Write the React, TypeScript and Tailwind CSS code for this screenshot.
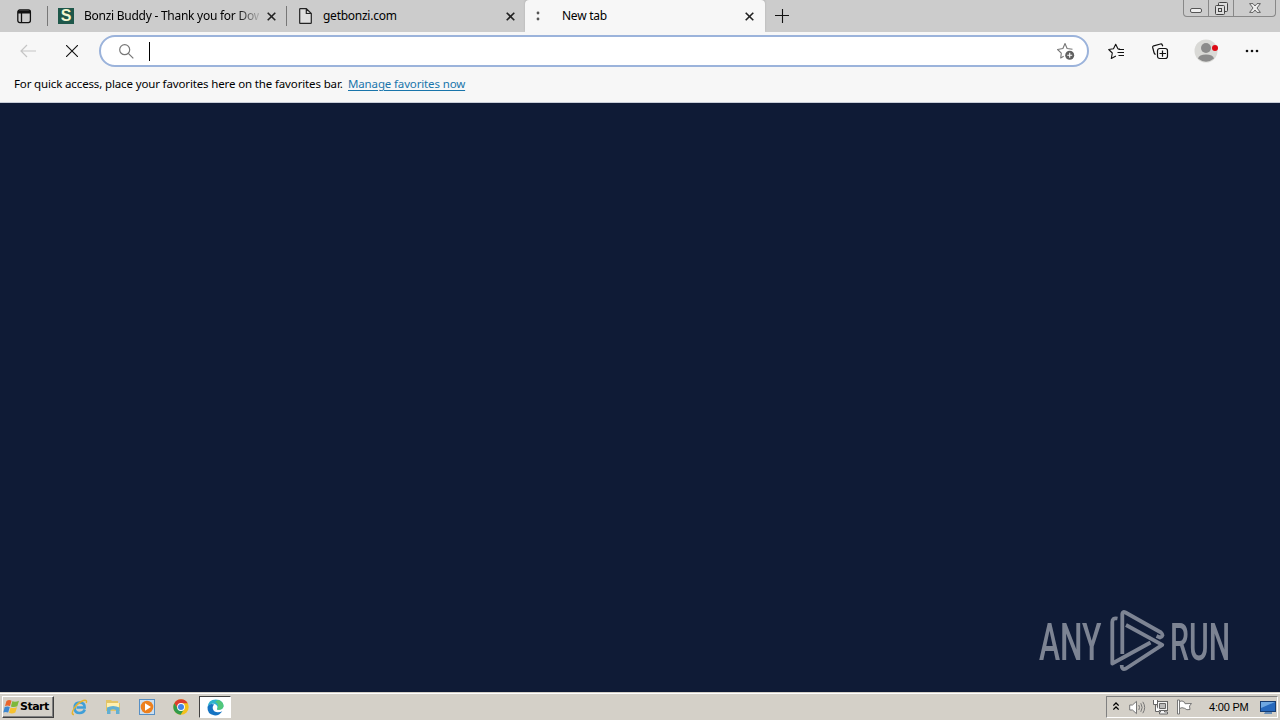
import type { ReactNode } from 'react';

function CloseX({ className = '' }: { className?: string }) {
  return (
    <svg className={className} width="9" height="9" viewBox="0 0 9 9" fill="none" stroke="#222" strokeWidth="1.6">
      <path d="M.7.7l7.6 7.6M8.3.7L.7 8.3" />
    </svg>
  );
}

function TabStrip() {
  return (
    <div className="flex h-8 w-full bg-[#cccccc] text-[12px] leading-4 text-black">
      <div className="flex w-[47px] items-center pl-[17px]">
        <svg width="15" height="15" viewBox="0 0 15 15" fill="none" stroke="#111" strokeWidth="1.3">
          <rect x=".8" y="1" width="12.6" height="12.6" rx="2" />
          <path d="M1 2.6h12.4M1 3.500h12.4" strokeWidth="1.8" />
          <path d="M4.5 4v9.5" />
        </svg>
      </div>
      <div className="mt-[6px] h-5 w-px bg-[#777]" />
      <div className="flex w-[238px] items-center pl-[10px]">
        <div className="flex h-4 w-4 items-center justify-center bg-[#1e574a] text-[16px] font-bold leading-4 text-[#f3f6cf] font-['Liberation_Sans']">
          S
        </div>
        <div className="ml-[10px] w-[175px] whitespace-nowrap [mask-image:linear-gradient(to_right,black_87%,transparent_102%)]">
          <span className="tracking-[-0.26px]">Bonzi Buddy - Thank you for Dow</span>
        </div>
        <CloseX className="ml-[8px]" />
      </div>
      <div className="mt-[6px] h-5 w-px bg-[#777]" />
      <div className="flex w-[238px] items-center pl-[12px]">
        <svg width="13" height="16" viewBox="0 0 13 16" fill="#dedede" stroke="#222" strokeWidth="1.2">
          <path d="M.7 1.300Q.7.600 1.400.6H7.300L12.300 5.500V14.700Q12.300 15.400 11.600 15.400H1.400Q.7 15.400.7 14.700zM7.300.6V5.500H12.300" />
        </svg>
        <span className="ml-[11px] w-[174px] tracking-[-0.26px]">getbonzi.com</span>
        <CloseX className="ml-[9px]" />
      </div>
      <div className="flex w-[240px] items-center rounded-t-[4px] bg-[#f7f7f7] pl-[11px] shadow-[0_-1px_2px_#aaa]">
        <svg width="4" height="10" viewBox="0 0 4 10" fill="#555">
          <circle cx="2" cy="2" r="1.400" />
          <circle cx="2" cy="8" r="1.400" />
        </svg>
        <span className="ml-[22px] w-[174px] tracking-[-0.26px]">New tab</span>
        <CloseX className="ml-[9px]" />
      </div>
      <div className="flex w-9 items-center pl-[10px]">
        <svg width="14" height="14" viewBox="0 0 14 14" stroke="#111" strokeWidth="1.1">
          <path d="M7.500 0V14M0 6.500H14" />
        </svg>
      </div>
      <div className="ml-auto mr-[4px] flex h-[17px] w-[93px] rounded-b-[4px] border border-t-0 border-[#888]">
        <div className="flex w-[25px] items-end justify-center border-r border-[#888] pb-[3px]">
          <svg width="12" height="5" viewBox="0 0 12 5">
            <rect x=".5" y=".5" width="11" height="4" rx="1.500" fill="#eee" stroke="#555" />
          </svg>
        </div>
        <div className="flex w-[25px] items-center justify-center border-r border-[#888]">
          <svg width="13" height="13" viewBox="0 0 13 13" fill="#ddd" stroke="#444">
            <rect x="3.500" y=".5" width="9" height="9" rx="1" />
            <rect x=".5" y="3.500" width="9" height="9" rx="1" />
            <rect x="3.500" y="6.500" width="3" height="3" />
          </svg>
        </div>
        <div className="flex flex-1 items-center justify-center">
          <svg width="12" height="10" viewBox="0 0 12 10" fill="#eee" stroke="#555" strokeWidth=".9">
            <path d="M.6.6H4L6 3 8 .6H11.400L8 5 11.400 9.400H8L6 7 4 9.400H.6L4 5z" />
          </svg>
        </div>
      </div>
    </div>
  );
}

function Toolbar() {
  return (
    <div className="flex h-[38px] w-full bg-[#f7f7f7] pt-[3px]">
      <div className="flex h-8 w-[99px] items-center pl-5">
        <svg width="17" height="14" viewBox="0 0 17 14" fill="none" stroke="#c5c5c5" strokeWidth="1.200">
          <path d="M16 7H1M7 1L1 7l6 6" />
        </svg>
        <svg className="ml-[29px]" width="12" height="12" viewBox="0 0 12 12" stroke="#111" strokeWidth="1.100">
          <path d="M0 0l12 12M12 0L0 12" />
        </svg>
      </div>
      <div className="flex h-8 w-[990px] items-center rounded-full border-2 border-[#9bb3db] bg-white pl-[18px]">
        <svg width="15" height="15" viewBox="0 0 15 15" fill="none" stroke="#777" strokeWidth="1.200">
          <circle cx="5.700" cy="5.700" r="5" />
          <path d="M9.300 9.300L14.300 14.300" />
        </svg>
        <div className="ml-[15px] h-[19px] w-px bg-black" />
        <svg className="ml-auto mr-[12px]" width="18" height="18" viewBox="0 0 18 18" fill="none" stroke="#777" strokeWidth="1.100" strokeLinejoin="round">
          <path d="M6.700 14.300 3.700 16 4.300 11.200.6 7.500 5.900 6.500 8 1.500 10.100 6.500 15.500 7.200" />
          <circle cx="12.700" cy="13.200" r="4.500" fill="#606060" stroke="none" />
          <path d="M12.700 10.700v5M10.200 13.200h5" stroke="#fff" />
        </svg>
      </div>
      <div className="flex h-8 flex-1 items-center pl-[19px]">
        <svg width="17" height="17" viewBox="0 0 17 17" fill="none" stroke="#111" strokeWidth="1.100" strokeLinejoin="round">
          <path d="M12 6.100 9.900 5.800 7.700 1.200 5.500 5.800.7 6.500 4.300 10 3.300 15.500 7.900 13.100M10.500 6.500H16M9.500 9.500H16M10.500 12.500H16" />
        </svg>
        <svg className="ml-[27px]" width="17" height="17" viewBox="0 0 17 17" fill="none" stroke="#111" strokeWidth="1.200">
          <path d="M3.600 11.500Q2.300 10.800 2 9.500L.7 4.500Q.4 3.200 1.700 2.800L8.500 1Q9.800.7 10.300 2L10.700 3.300" />
          <rect x="5.500" y="5.500" width="10" height="10" rx="2.200" />
          <path d="M10.500 7.500v6.300M7.500 10.500H14" />
        </svg>
        <svg className="ml-[25px]" width="24" height="24" viewBox="0 0 24 24">
          <circle cx="12" cy="12" r="11.500" fill="#d9d9d6" />
          <circle cx="12" cy="9" r="5" fill="#8b8b8b" />
          <path d="M4 19.500Q5 15.500 12 15.500T20 19.500Q12 26 4 19.500" fill="#8b8b8b" />
          <circle cx="21" cy="9" r="3" fill="#dd0914" />
        </svg>
        <svg className="ml-[27px]" width="14" height="4" viewBox="0 0 14 4" fill="#111">
          <circle cx="2" cy="2" r="1.300" />
          <circle cx="7" cy="2" r="1.300" />
          <circle cx="12" cy="2" r="1.300" />
        </svg>
      </div>
    </div>
  );
}

function Watermark() {
  return (
    <div className="flex h-[62px] items-center text-[52px] font-medium leading-none text-[#7d8493]">
      <div className="w-[65px] whitespace-nowrap">
        <span className="inline-block origin-left scale-x-[0.61] font-['Roboto']">ANY</span>
      </div>
      <svg className="ml-[6px]" width="56" height="62" viewBox="0 0 56 62" fill="none" stroke="#7d8493" strokeWidth="3.800" strokeLinejoin="round">
        <path d="M7.500 8.500Q2.300 7.500 2.300 12V53.500L40.500 32.500" />
        <path d="M12.300 44V4Q12.500 1 15.500 2.500L51 22.500Q54.500 26 50 27.500L46.500 26" />
        <path d="M16 15L52.300 34.800 16 58.500Q11.500 60.500 11.700 55" />
      </svg>
      <div className="ml-[4px] w-[62px] whitespace-nowrap">
        <span className="inline-block origin-left scale-x-[0.58] font-['Roboto']">RUN</span>
      </div>
    </div>
  );
}

function Launcher({ children, active = false }: { children: ReactNode; active?: boolean }) {
  return (
    <div
      className={
        active
          ? 'flex h-[22px] w-[32px] items-center justify-center border border-b-white border-l-[#404040] border-r-white border-t-[#404040] bg-white'
          : 'flex h-[22px] w-[34px] items-center justify-center'
      }
    >
      {children}
    </div>
  );
}

function WindowsFlag() {
  return (
    <svg className="shrink-0" width="17" height="16" viewBox="0 0 17 16">
      <path d="M3.500 2Q6 .3 8.500 1.700L7 7Q4.500 5.800 2 7z" fill="#e8642b" />
      <path d="M9.300 2.200Q12.500 3.300 16 1.700L14.300 7.200Q11 8.600 7.900 7.400z" fill="#7eb83c" />
      <path d="M1.700 8Q4.500 6.800 6.800 8L5.200 13.500Q2.500 12.300.3 13.500z" fill="#3c87d0" />
      <path d="M7.600 8.400Q10.700 9.500 14 8.300L12.300 13.500Q9 15.200 6 13.800z" fill="#f6c12e" />
    </svg>
  );
}

function Taskbar() {
  return (
    <div className="flex h-7 w-full items-center border-t border-[#d4d0c8] bg-[#d4d0c8] pb-[2px] pl-[2px] shadow-[inset_0_1px_0_#fff]">
      <div className="mt-[3px] flex h-[22px] w-[52px] items-center border border-b-[#404040] border-l-white border-r-[#404040] border-t-white shadow-[inset_-1px_-1px_0_#808080]">
        <WindowsFlag />
        <span className="text-[11px] font-bold leading-4 tracking-[-0.5px] text-black font-['DejaVu_Sans']">Start</span>
      </div>
      <div className="ml-[8px] mt-[3px] flex items-center">
        <Launcher>
          <svg width="17" height="17" viewBox="0 0 17 17" fill="none">
            <path d="M13.800 10.500Q12.500 14 8.700 14 3.600 14 3.600 8.700T8.700 3.500Q13.700 3.600 13.700 8.500H5.500" stroke="#3f9fd8" strokeWidth="2.500" />
            <path d="M3 15.500Q-.5 15.500 3 9.500 7 3.500 12.500 1.500 16.500.5 15.300 4" stroke="#e7b42d" strokeWidth="1.400" />
          </svg>
        </Launcher>
        <Launcher>
          <svg width="16" height="16" viewBox="0 0 16 16">
            <path d="M1 1H6L7 2H13V4H15V12H1z" fill="#e3c466" />
            <path d="M2 4H14V9H2z" fill="#fff0b0" />
            <path d="M2 8.500Q8 5.500 14.500 8.500V15H11V11Q8 9.500 5.500 11V15H2z" fill="#62afd2" />
          </svg>
        </Launcher>
        <Launcher>
          <svg width="16" height="16" viewBox="0 0 16 16">
            <rect x=".5" y=".5" width="15" height="15" fill="#cbdff1" stroke="#578fc4" />
            <circle cx="8" cy="8" r="6.300" fill="#ed801e" />
            <path d="M6 4.300L12 8 6 11.700z" fill="#fff" />
          </svg>
        </Launcher>
        <Launcher>
          <svg width="16" height="16" viewBox="0 0 16 16">
            <circle cx="8" cy="8" r="7.700" fill="#f3c11b" />
            <path d="M1.300 4.200A7.700 7.700 0 0 1 14.700 4.200H8L5 10z" fill="#dc3d30" />
            <path d="M1.300 4.200A7.700 7.700 0 0 0 7.600 15.700L11.300 9.800H5z" fill="#319b4c" />
            <circle cx="8" cy="8" r="3.900" fill="#fff" />
            <circle cx="8" cy="8" r="3" fill="#4384e8" />
          </svg>
        </Launcher>
        <div className="ml-px">
          <Launcher active>
            <svg width="17" height="17" viewBox="0 0 17 17">
              <path d="M.5 8.500Q1 .5 8.800.4C14 .4 16.700 4 16.500 7.300 16.300 11 11 11.500 10 10.200 12 7 8 3.800 4.500 5Q1 6 .5 8.500" fill="#2fb3d0" />
              <path d="M11 1C15 2 16.700 4.500 16.500 7.300 16.300 11 11 11.500 10 10.200 12 7 11 4 8 3z" fill="#52c77a" />
              <path d="M.5 8Q2.500 3.500 7.300 5.500C4 8 6 13.500 11 13.300Q13.500 13.300 15.300 12.200 12 17 7 16.300 0 15 .5 8" fill="#1674c3" />
            </svg>
          </Launcher>
        </div>
      </div>
      <div className="ml-auto mr-[2px] mt-[3px] flex h-[22px] w-[172px] items-center border border-b-white border-l-[#808080] border-r-white border-t-[#808080] pl-[6px]">
        <svg className="mb-[2px]" width="6" height="9" viewBox="0 0 6 9" fill="none" stroke="#000" strokeWidth="1.300">
          <path d="M.3 3.500L3 1 5.700 3.500M.3 7.500L3 5 5.700 7.500" />
        </svg>
        <svg className="ml-[10px]" width="17" height="15" viewBox="0 0 17 15" fill="none" stroke="#777">
          <path d="M.7 5H3.500L7.500 1.300V13.700L3.500 10H.7z" fill="#fff" />
          <path d="M9.800 5Q11.300 7.500 9.800 10M11.800 3.200Q14.500 7.500 11.800 11.800M13.800 1.800Q17.500 7.500 13.800 13.200" />
        </svg>
        <svg className="ml-[7px]" width="17" height="16" viewBox="0 0 17 16" fill="#f4f4f4" stroke="#666">
          <rect x="4.500" y="2.500" width="10" height="9" />
          <path d="M6.500 4.500h6v5h-6z" fill="#bbb" />
          <path d="M7.500 11.500h4v1.500h3v2h-8v-2h1z" />
          <path d="M.5 1v4.500h4V1M2.500 5.500v7h4" fill="#fff" />
        </svg>
        <svg className="ml-[6px]" width="17" height="16" viewBox="0 0 17 16" fill="#fff" stroke="#777">
          <path d="M3.500 2.500Q6 1 8.500 3.200L9 4.700 15.500 4.500 13.500 7 14 10.500Q10.500 11.500 8.500 9.300 6 8 3.500 9.500z" />
          <path d="M1.500 1h2v14h-2z" />
        </svg>
        <span className="ml-[16px] w-[50px] whitespace-nowrap text-[11px] leading-4 tracking-[-0.2px] text-black font-['Liberation_Sans']">4:00 PM</span>
        <svg className="ml-auto mr-px" width="16" height="15" viewBox="0 0 16 15">
          <rect x=".5" y="1.500" width="15" height="10" fill="#2769bd" stroke="#173d72" />
          <path d="M1 2H15L1 8z" fill="#6fa8e2" />
          <path d="M5 12h7v2H4z" fill="#668db8" />
        </svg>
      </div>
    </div>
  );
}

export default function App() {
  return (
    <div className="flex h-[720px] w-[1280px] flex-col overflow-hidden bg-[#f7f7f7] font-['Noto_Sans',sans-serif]">
      <TabStrip />
      <Toolbar />
      <div className="flex h-[33px] w-full items-start border-b border-[#c8cdd8] pl-[14px] pt-[6px] text-[11.500px] leading-4">
        <span className="w-[334px] whitespace-nowrap tracking-[-0.14px] text-black">For quick access, place your favorites here on the favorites bar.</span>
        <span className="whitespace-nowrap tracking-[-0.14px] text-[#1975ab] underline underline-offset-2">Manage favorites now</span>
      </div>
      <main className="flex flex-1 items-end justify-end bg-[#0f1b36] pb-5 pr-[48px]">
        <Watermark />
      </main>
      <Taskbar />
    </div>
  );
}
